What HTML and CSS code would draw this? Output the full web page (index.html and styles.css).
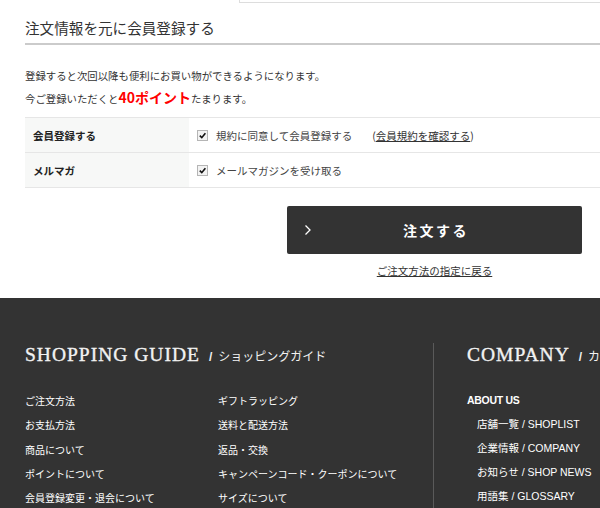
FILE: index.html
```html
<!DOCTYPE html>
<html lang="ja">
<head>
<meta charset="utf-8">
<title>注文情報を元に会員登録する</title>
<link rel="stylesheet" href="styles.css">
</head>
<body>
<div class="topbox"></div>
<main class="main">
  <h2 class="title">注文情報を元に会員登録する</h2>
  <div class="lead">
    <p>登録すると次回以降も便利にお買い物ができるようになります。</p>
    <p>今ご登録いただくと<strong class="pt">40ポイント</strong>たまります。</p>
  </div>
  <div class="form">
    <div class="row">
      <div class="th">会員登録する</div>
      <div class="td"><span class="cb"><svg viewBox="0 0 10 10" width="10" height="10"><path d="M2 5.2 L4.2 7.4 L8.2 2.4" fill="none" stroke="#111" stroke-width="1.8"/></svg></span>規約に同意して会員登録する<a class="terms" href="#">(<u>会員規約を確認する</u>)</a></div>
    </div>
    <div class="row">
      <div class="th">メルマガ</div>
      <div class="td"><span class="cb"><svg viewBox="0 0 10 10" width="10" height="10"><path d="M2 5.2 L4.2 7.4 L8.2 2.4" fill="none" stroke="#111" stroke-width="1.8"/></svg></span>メールマガジンを受け取る</div>
    </div>
  </div>
  <div class="actions">
    <button class="order" type="button">
      <svg class="chev" viewBox="0 0 8 12" width="8" height="12"><polyline points="1.5,1.5 6,6 1.5,10.5" fill="none" stroke="#fff" stroke-width="1.3"/></svg>
      <span>注文する</span>
    </button>
    <a class="back" href="#">ご注文方法の指定に戻る</a>
  </div>
</main>
<footer class="footer">
  <div class="fcols">
    <section class="guide">
      <h3 class="ftitle">SHOPPING GUIDE<span class="sub">/</span><span class="subjp">ショッピングガイド</span></h3>
      <ul class="glinks">
        <li>ご注文方法</li><li>ギフトラッピング</li>
        <li>お支払方法</li><li>送料と配送方法</li>
        <li>商品について</li><li>返品・交換</li>
        <li>ポイントについて</li><li>キャンペーンコード・クーポンについて</li>
        <li>会員登録変更・退会について</li><li>サイズについて</li>
      </ul>
    </section>
    <section class="company">
      <h3 class="ftitle">COMPANY<span class="sub">/</span><span class="subjp">カンパニー</span></h3>
      <ul class="clinks">
        <li class="head">ABOUT US</li>
        <li>店舗一覧 / SHOPLIST</li>
        <li>企業情報 / COMPANY</li>
        <li>お知らせ / SHOP NEWS</li>
        <li>用語集 / GLOSSARY</li>
      </ul>
    </section>
  </div>
</footer>
</body>
</html>
```

FILE: styles.css
```css
html, body {
  margin: 0;
  padding: 0;
  width: 600px;
  height: 508px;
  overflow: hidden;
  background: #fff;
}
body {
  font-family: "Noto Sans CJK JP", "Liberation Sans", sans-serif;
  color: #333;
}
.topbox {
  margin-left: 239px;
  height: 2px;
  border-left: 1px solid #ddd;
  border-bottom: 1px solid #ddd;
}
.main {
  padding-left: 25px;
}
.title {
  margin: 0;
  padding: 15px 0 5px;
  font-size: 14.6px;
  line-height: 20px;
  font-weight: normal;
  color: #333;
  border-bottom: 2px solid #cbcbcb;
}
.lead {
  margin-top: 20px;
  font-size: 10.4px;
  line-height: 22px;
  height: 44px;
}
.lead p {
  margin: 0;
  height: 22px;
}
.pt {
  color: #f00;
  font-size: 14px;
  font-weight: bold;
  line-height: 20px;
}
.form {
  margin-top: 8px;
  font-size: 10.5px;
  border-top: 1px solid #e6e6e6;
}
.row {
  display: flex;
  height: 34px;
  border-bottom: 1px solid #e6e6e6;
}
.th, .td {
  display: flex;
  align-items: center;
  padding-left: 8px;
}
.th {
  width: 156px;
  flex: none;
  background: #f7f8f7;
  font-weight: bold;
  color: #222;
}
.td {
  flex: 1;
  color: #444;
}
.cb {
  display: inline-flex;
  align-items: center;
  justify-content: center;
  width: 9px;
  height: 9px;
  border: 1px solid #b5b5b5;
  background: #f3f3f3;
  margin-right: 8px;
}
.cb svg {
  width: 9px;
  height: 9px;
}
.terms {
  margin-left: 20px;
  color: #333;
  text-decoration: none;
}
.actions {
  display: flex;
  flex-direction: column;
  align-items: center;
  width: 295px;
  margin: 18px 0 0 262px;
}
.order {
  position: relative;
  width: 295px;
  height: 48px;
  border: none;
  border-radius: 2px;
  background: #333;
  color: #fff;
  font-family: "Noto Sans CJK JP", sans-serif;
  font-size: 14px;
  font-weight: bold;
  letter-spacing: 2.5px;
  display: flex;
  align-items: center;
  justify-content: center;
  padding: 0;
}
.order span {
  margin-left: 3px;
}
.chev {
  position: absolute;
  left: 17px;
  top: 18px;
}
.back {
  margin-top: 9px;
  font-size: 10.5px;
  line-height: 16px;
  color: #333;
  text-decoration: underline;
}
.footer {
  margin-top: 19px;
  background: #333;
  height: 210px;
  padding: 45px 0 0 25px;
  box-sizing: border-box;
  overflow: hidden;
  color: #fff;
}
.fcols {
  display: flex;
  height: 100%;
}
.guide {
  width: 408px;
  flex: none;
  border-right: 1px solid #5a5a5a;
}
.company {
  padding-left: 33px;
  white-space: nowrap;
}
.ftitle {
  margin: 0;
  font-family: "Liberation Serif", serif;
  font-weight: normal;
  font-size: 19.5px;
  letter-spacing: 1px;
  line-height: 24px;
  color: #f2f2f2;
  white-space: nowrap;
  -webkit-text-stroke: 0.35px #f2f2f2;
}
.ftitle .sub {
  font-family: "Liberation Sans", sans-serif;
  font-size: 12px;
  font-weight: bold;
  margin: 0 6px 0 9px;
  letter-spacing: 0;
  -webkit-text-stroke: 0;
}
.ftitle .subjp {
  font-family: "Noto Sans CJK JP", sans-serif;
  font-size: 12px;
  letter-spacing: 0;
  -webkit-text-stroke: 0;
}
ul {
  list-style: none;
  margin: 0;
  padding: 0;
}
.glinks {
  margin-top: 20px;
  display: grid;
  grid-template-columns: 193px 1fr;
  grid-auto-rows: 24.3px;
  font-size: 10px;
  line-height: 24.3px;
}
.clinks {
  margin-top: 19px;
  font-family: "Liberation Sans", "Noto Sans CJK JP", sans-serif;
  font-size: 10.5px;
  line-height: 24px;
}
.clinks li {
  padding-left: 10px;
}
.clinks li.head {
  padding-left: 0;
  font-weight: bold;
  font-size: 10.5px;
  letter-spacing: -0.3px;
}
```
